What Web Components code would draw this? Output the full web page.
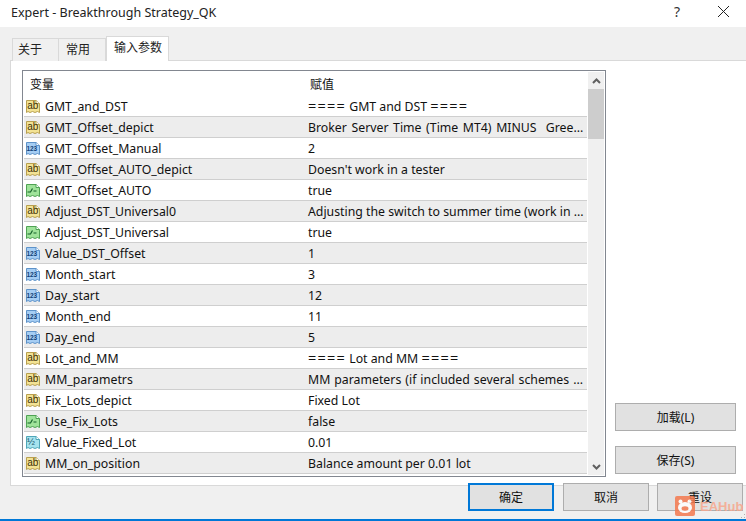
<!DOCTYPE html>
<html>
<head>
<meta charset="utf-8">
<title>Expert</title>
<style>
  html, body { margin: 0; padding: 0; background: #fff; }
  body { font: 12px "Noto Sans", "Noto Sans CJK SC", sans-serif; color: #000; }
  .eq { font-size: 14.5px; letter-spacing: 1.2px; line-height: 12px; }
</style>
</head>
<body>
<expert-dialog>
  <span slot="title">Expert - Breakthrough Strategy_QK</span>
  <tab-strip slot="tabs">
    <tab-item style="--pad:0 16px 0 5px">关于</tab-item>
    <tab-item style="--pad:0 15px 0 7px">常用</tab-item>
    <tab-item active>输入参数</tab-item>
  </tab-strip>
  <param-list slot="list">
    <param-row type="ab"><span slot="name">GMT_and_DST</span><span class="eq">====</span> GMT and DST <span class="eq">====</span></param-row>
    <param-row type="ab"><span slot="name">GMT_Offset_depict</span><span style="word-spacing:1.4px">Broker Server Time (Time MT4) MINUS  Gree...</span></param-row>
    <param-row type="123"><span slot="name">GMT_Offset_Manual</span>2</param-row>
    <param-row type="ab"><span slot="name">GMT_Offset_AUTO_depict</span>Doesn't work in a tester</param-row>
    <param-row type="bool"><span slot="name">GMT_Offset_AUTO</span>true</param-row>
    <param-row type="ab"><span slot="name">Adjust_DST_Universal0</span>Adjusting the switch to summer time (work in ...</param-row>
    <param-row type="bool"><span slot="name">Adjust_DST_Universal</span>true</param-row>
    <param-row type="123"><span slot="name">Value_DST_Offset</span>1</param-row>
    <param-row type="123"><span slot="name">Month_start</span>3</param-row>
    <param-row type="123"><span slot="name">Day_start</span>12</param-row>
    <param-row type="123"><span slot="name">Month_end</span>11</param-row>
    <param-row type="123"><span slot="name">Day_end</span>5</param-row>
    <param-row type="ab"><span slot="name">Lot_and_MM</span><span class="eq">====</span> Lot and MM <span class="eq">====</span></param-row>
    <param-row type="ab"><span slot="name">MM_parametrs</span><span style="word-spacing:.8px">MM parameters (if included several schemes ...</span></param-row>
    <param-row type="ab"><span slot="name">Fix_Lots_depict</span>Fixed Lot</param-row>
    <param-row type="bool"><span slot="name">Use_Fix_Lots</span>false</param-row>
    <param-row type="half"><span slot="name">Value_Fixed_Lot</span>0.01</param-row>
    <param-row type="ab"><span slot="name">MM_on_position</span>Balance amount per 0.01 lot</param-row>
  </param-list>
  <dlg-button slot="side">加载(L)</dlg-button>
  <dlg-button slot="side">保存(S)</dlg-button>
  <dlg-button slot="footer" primary style="--w:86px">确定</dlg-button>
  <dlg-button slot="footer" style="--w:86px">取消</dlg-button>
  <dlg-button slot="footer" style="--w:86px">重设</dlg-button>
  <hub-mark slot="mark"></hub-mark>
</expert-dialog>

<script>
// Outer window: title bar, tab panel, footer row
class ExpertDialog extends HTMLElement {
  constructor() {
    super();
    this.attachShadow({ mode: 'open' });
    this.shadowRoot.innerHTML = `
      <style>
        :host {
          display: flex;
          flex-direction: column;
          position: relative;
          width: 746px;
          height: 521px;
          overflow: hidden;
          box-sizing: border-box;
          background: #f0f0f0;
          border-bottom: 2px solid #0078d7;
        }
        .title {
          height: 27px;
          flex: none;
          background: #fff;
          display: flex;
          align-items: center;
          padding: 0 0 0 11px;
          font-size: 12.5px;
          color: #222;
        }
        .title .text { flex: 1; margin-top: -3px; }
        .help { width: 46px; text-align: center; font-size: 14px; color: #333; margin-top: -4px; }
        .close { width: 46px; height: 20px; display: flex; align-items: center; justify-content: center; margin-top: -5px; }
        .tabs { flex: none; height: 33px; padding-left: 12px; display: flex; align-items: flex-end; }
        .panel {
          flex: none;
          height: 426px;
          margin: 0 0 0 10px;
          box-sizing: border-box;
          background: #fff;
          border-top: 1px solid #d9d9d9;
          border-bottom: 1px solid #d9d9d9;
          border-left: 1px solid #d9d9d9;
          padding: 9px 10px 0 11px;
          display: flex;
        }
        .side {
          flex: 1;
          display: flex;
          flex-direction: column;
          gap: 15px;
          padding: 333px 0 0 9px;
        }
        .footer {
          flex: none;
          display: flex;
          gap: 8px;
          justify-content: flex-end;
          margin-top: -3px;
          padding-right: 3px;
        }
        .grip { position: absolute; right: 0; bottom: 0; display: block; }
      </style>
      <div class="title">
        <span class="text"><slot name="title"></slot></span>
        <span class="help">?</span>
        <span class="close">
          <svg width="13" height="13" viewBox="0 0 13 13"><path d="M1 1 L12 12 M12 1 L1 12" stroke="#222" stroke-width="1" fill="none"/></svg>
        </span>
      </div>
      <div class="tabs"><slot name="tabs"></slot></div>
      <div class="panel">
        <slot name="list"></slot>
        <div class="side"><slot name="side"></slot></div>
      </div>
      <div class="footer"><slot name="footer"></slot></div>
      <slot name="mark"></slot>
      <svg class="grip" width="5" height="5" viewBox="0 0 5 5"><path d="M3 0h1v1H3zM0 3h1v1H0zM3 3h1v1H3z" fill="#b0b0b0"/></svg>
    `;
  }
}

class TabStrip extends HTMLElement {
  constructor() {
    super();
    this.attachShadow({ mode: 'open' });
    this.shadowRoot.innerHTML = `
      <style>
        :host { display: flex; align-items: flex-end; margin-bottom: -1px; position: relative; z-index: 1; }
      </style>
      <slot></slot>
    `;
  }
}

class TabItem extends HTMLElement {
  constructor() {
    super();
    this.attachShadow({ mode: 'open' });
    this.shadowRoot.innerHTML = `
      <style>
        :host {
          display: block;
          box-sizing: border-box;
          height: 23px;
          padding: var(--pad, 0 7px);
          line-height: 22px;
          font-size: 12px;
          background: #f0f0f0;
          border: 1px solid #d9d9d9;
          border-bottom: none;
          margin-right: -1px;
          color: #222;
          white-space: nowrap;
        }
        :host([active]) {
          height: 25px;
          padding: 0 6px 0 7px;
          margin-left: 1px;
          background: #fff;
          line-height: 22px;
        }
      </style>
      <slot></slot>
    `;
  }
}

// Scrolling grid of parameters, fixed scrollbar on the right
class ParamList extends HTMLElement {
  constructor() {
    super();
    this.attachShadow({ mode: 'open' });
    this.shadowRoot.innerHTML = `
      <style>
        :host {
          display: flex;
          flex: none;
          box-sizing: border-box;
          width: 584px;
          height: 407px;
          background: #fff;
          border: 1px solid #828790;
        }
        .main { flex: 1; min-width: 0; overflow: hidden; padding-left: 1px; }
        .head { height: 25px; display: flex; align-items: center; font-size: 12px; color: #111; }
        .head span:first-child { width: 281px; padding-left: 6px; box-sizing: border-box; }
        .head span:last-child { padding-left: 5px; }
        .bar { flex: none; width: 16px; background: #f0f0f0; display: flex; flex-direction: column; margin: 1px; }
        .arrow { height: 17px; flex: none; display: flex; align-items: center; justify-content: center; }
        .fill { flex: 1; }
        .thumb { height: 50px; background: #cdcdcd; flex: none; }
      </style>
      <div class="main">
        <div class="head"><span>变量</span><span>赋值</span></div>
        <slot></slot>
      </div>
      <div class="bar">
        <div class="arrow"><svg width="9" height="6" viewBox="0 0 9 6"><path d="M1 5 L4.5 1.5 L8 5" stroke="#606060" stroke-width="2" fill="none"/></svg></div>
        <div class="thumb"></div>
        <div class="fill"></div>
        <div class="arrow"><svg width="9" height="6" viewBox="0 0 9 6"><path d="M1 1 L4.5 4.5 L8 1" stroke="#606060" stroke-width="2" fill="none"/></svg></div>
      </div>
    `;
  }
}

class ParamRow extends HTMLElement {
  constructor() {
    super();
    this.attachShadow({ mode: 'open' });
    this.shadowRoot.innerHTML = `
      <style>
        :host {
          display: flex;
          box-sizing: border-box;
          height: 21px;
          align-items: center;
          background: #fff;
          border-bottom: 1px solid #cfcfcf;
          font-size: 12.3px;
          color: #111;
        }
        :host(:nth-child(even)) { background: #ededed; }
        .name { width: 281px; flex: none; display: flex; align-items: center; gap: 4px; padding-left: 1px; box-sizing: border-box; white-space: nowrap; }
        .val { padding-left: 3px; white-space: pre; }
      </style>
      <div class="name"><type-icon></type-icon><slot name="name"></slot></div>
      <div class="val"><slot></slot></div>
    `;
  }
  connectedCallback() {
    this.shadowRoot.querySelector('type-icon').setAttribute('type', this.getAttribute('type'));
  }
}

// Small document-shaped type badge in front of every parameter
class TypeIcon extends HTMLElement {
  static get observedAttributes() { return ['type']; }
  constructor() {
    super();
    this.attachShadow({ mode: 'open' });
  }
  attributeChangedCallback() { this.render(); }
  render() {
    const looks = {
      ab: { fill: '#f3e394', edge: '#b8a050', inner: '<text x="2.2" y="11.2" font-size="10" font-family="Liberation Sans" fill="#3d3208">ab</text>' },
      123: { fill: '#a5cdf3', edge: '#5d92c9', inner: '<text x="1.4" y="10.5" font-size="6.5" font-weight="700" font-family="Liberation Sans" fill="#123f78">123</text>' },
      bool: { fill: '#9fe39a', edge: '#4fa254', inner: '<path d="M2.5 10 H5.5 L7.5 6.5 M8.5 9 H11.5" stroke="#14602a" stroke-width="1.2" fill="none"/>' },
      half: { fill: '#a6e3ee', edge: '#4fa6b8', inner: '<text x="2" y="11" font-size="9.5" font-family="Liberation Sans" fill="#124f68">½</text>' }
    };
    const t = looks[this.getAttribute('type')] || looks.ab;
    this.shadowRoot.innerHTML = `<style>
        :host { display: block; width: 16px; height: 16px; flex: none; }
        svg { display: block; }
      </style><svg width="16" height="16" viewBox="0 0 16 16">
        <path d="M1.5 2.5 H11 L14.5 5.5 V14.5 L12.5 13.5 L10 14.5 L7.5 13.5 L5 14.5 L3 13.5 L1.5 14.5 Z" fill="${t.fill}" stroke="${t.edge}"/>
        <path d="M11 2.5 V5.5 H14.5" fill="#fff" stroke="${t.edge}"/>
        ${t.inner}
      </svg>`;
  }
}

class DlgButton extends HTMLElement {
  constructor() {
    super();
    this.attachShadow({ mode: 'open' });
    this.shadowRoot.innerHTML = `
      <style>
        :host {
          display: flex;
          align-items: center;
          justify-content: center;
          box-sizing: border-box;
          width: var(--w, 121px);
          height: 28px;
          background: #e1e1e1;
          border: 1px solid #adadad;
          font-size: 12px;
          color: #111;
        }
        :host([primary]) { border: 2px solid #0078d7; margin-right: 1px; }
      </style>
      <slot></slot>
    `;
  }
}

// Watermark that lies over the reset button
class HubMark extends HTMLElement {
  constructor() {
    super();
    this.attachShadow({ mode: 'open' });
    this.shadowRoot.innerHTML = `
      <style>
        :host {
          position: absolute;
          left: 675px;
          top: 496px;
          display: flex;
          align-items: center;
          gap: 5px;
          opacity: .85;
          font: 700 13px "Liberation Sans", sans-serif;
          color: #f7a88e;
        }
        svg { display: block; }
        span { margin-top: 1px; }
      </style>
      <svg width="20" height="20" viewBox="0 0 20 20">
        <rect width="20" height="20" rx="2" fill="#f4794f"/>
        <ellipse cx="10" cy="11.5" rx="7" ry="5.5" fill="#fff"/>
        <circle cx="5.5" cy="5.5" r="2" fill="#fff"/>
        <circle cx="14.5" cy="5.5" r="2" fill="#fff"/>
        <ellipse cx="10" cy="12.5" rx="3.5" ry="2.2" fill="#f4794f"/>
      </svg>
      <span>EAHub</span>
    `;
  }
}

customElements.define('expert-dialog', ExpertDialog);
customElements.define('tab-strip', TabStrip);
customElements.define('tab-item', TabItem);
customElements.define('param-list', ParamList);
customElements.define('param-row', ParamRow);
customElements.define('type-icon', TypeIcon);
customElements.define('dlg-button', DlgButton);
customElements.define('hub-mark', HubMark);
</script>
</body>
</html>
